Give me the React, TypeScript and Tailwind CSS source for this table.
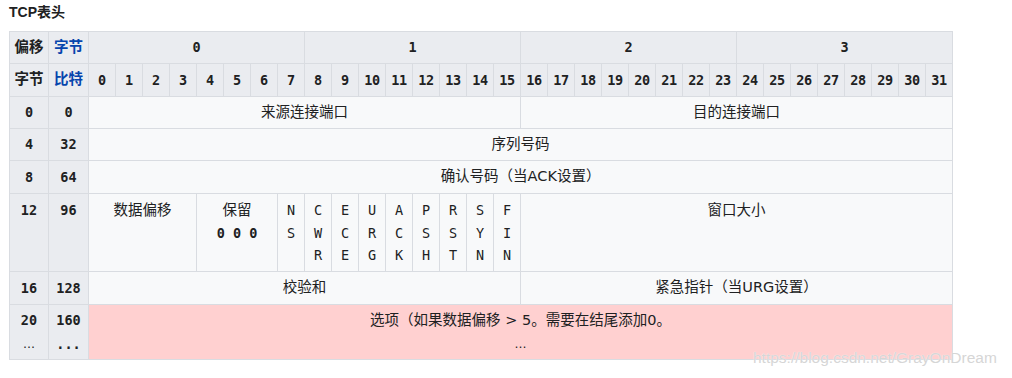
import React from "react";

const bits = Array.from({ length: 32 }, (_, i) => i);
const flags = ["NS", "CWR", "ECE", "URG", "ACK", "PSH", "RST", "SYN", "FIN"];

const th = "border border-[#d9dce1] bg-[#eaecf0] p-0 text-center";
const td = "border border-[#d9dce1] bg-[#f8f9fa] p-0 text-center font-normal";
const mono = "font-['DejaVu_Sans_Mono',monospace] font-bold text-[13.5px]";
const cjk = "font-['DejaVu_Sans','Noto_Sans_CJK_SC',sans-serif]";

function Offset({ byte, bit }: { byte: string; bit: string }) {
    return (
        <>
            <th className={`${th} ${mono}`}>{byte}</th>
            <th className={`${th} ${mono}`}>{bit}</th>
        </>
    );
}

export default function App() {
    return (
        <div className={`relative h-[378px] w-[1012px] bg-white text-[#202122] ${cjk}`}>
            <h3 className="pl-[9px] pt-[3px] h-[31px] text-[14px] font-bold leading-[18px] font-['Liberation_Sans','Noto_Sans_CJK_SC',sans-serif]">
                TCP表头
            </h3>
            <table className="ml-[9px] w-[943px] table-fixed border-collapse text-[14.5px]">
                <colgroup>
                    <col className="w-[39px]" />
                    <col className="w-[40px]" />
                    {bits.map((b) => (
                        <col key={b} className="w-[27px]" />
                    ))}
                </colgroup>
                <thead>
                    <tr className="h-[32px]">
                        <th className={`${th} font-bold`}>偏移</th>
                        <th className={`${th} font-bold text-[#0645ad]`}>字节</th>
                        {[0, 1, 2, 3].map((n) => (
                            <th key={n} colSpan={8} className={`${th} ${mono}`}>
                                {n}
                            </th>
                        ))}
                    </tr>
                    <tr className="h-[33px]">
                        <th className={`${th} font-bold`}>字节</th>
                        <th className={`${th} font-bold text-[#0645ad]`}>比特</th>
                        {bits.map((b) => (
                            <th key={b} className={`${th} ${mono} tracking-[-0.3px]`}>
                                {b}
                            </th>
                        ))}
                    </tr>
                </thead>
                <tbody>
                    <tr className="h-[32px]">
                        <Offset byte="0" bit="0" />
                        <td colSpan={16} className={td}>来源连接端口</td>
                        <td colSpan={16} className={td}>目的连接端口</td>
                    </tr>
                    <tr className="h-[32px]">
                        <Offset byte="4" bit="32" />
                        <td colSpan={32} className={td}>序列号码</td>
                    </tr>
                    <tr className="h-[33px]">
                        <Offset byte="8" bit="64" />
                        <td colSpan={32} className={td}>确认号码（当ACK设置）</td>
                    </tr>
                    <tr className="h-[78px] align-top leading-[22.5px]">
                        <th className={`${th} ${mono} pt-[5px] align-top`}>12</th>
                        <th className={`${th} ${mono} pt-[5px] align-top`}>96</th>
                        <td colSpan={4} className={`${td} pt-[5px] align-top`}>数据偏移</td>
                        <td colSpan={3} className={`${td} pt-[5px] align-top`}>
                            保留
                            <div className={`${mono} whitespace-pre`}>0 0 0</div>
                        </td>
                        {flags.map((f) => (
                            <td key={f} className={`${td} pt-[5px] align-top font-['DejaVu_Sans_Mono',monospace] text-[13.5px]`}>
                                {f.split("").map((c, i) => (
                                    <div key={i}>{c}</div>
                                ))}
                            </td>
                        ))}
                        <td colSpan={16} className={`${td} pt-[5px] align-top`}>窗口大小</td>
                    </tr>
                    <tr className="h-[33px]">
                        <Offset byte="16" bit="128" />
                        <td colSpan={16} className={td}>校验和</td>
                        <td colSpan={16} className={td}>紧急指针（当URG设置）</td>
                    </tr>
                    <tr className="h-[55px] leading-[24px]">
                        <th className={`${th} ${mono}`}>
                            20
                            <div className="font-['DejaVu_Sans',sans-serif] font-normal text-[12px]">…</div>
                        </th>
                        <th className={`${th} ${mono}`}>
                            160
                            <div>...</div>
                        </th>
                        <td colSpan={32} className="border border-[#d9dce1] bg-[#ffd0d0] p-0 text-center">
                            选项（如果数据偏移 &gt; 5。需要在结尾添加0。
                            <div className="text-[12px]">…</div>
                        </td>
                    </tr>
                </tbody>
            </table>
            <div className="absolute left-[753px] top-[348px] text-[15.5px] leading-[20px] text-[#d6d6d6] font-['Liberation_Sans',sans-serif] [text-shadow:0_0_1px_#ffffff]">
                https://blog.csdn.net/GrayOnDream
            </div>
        </div>
    );
}
